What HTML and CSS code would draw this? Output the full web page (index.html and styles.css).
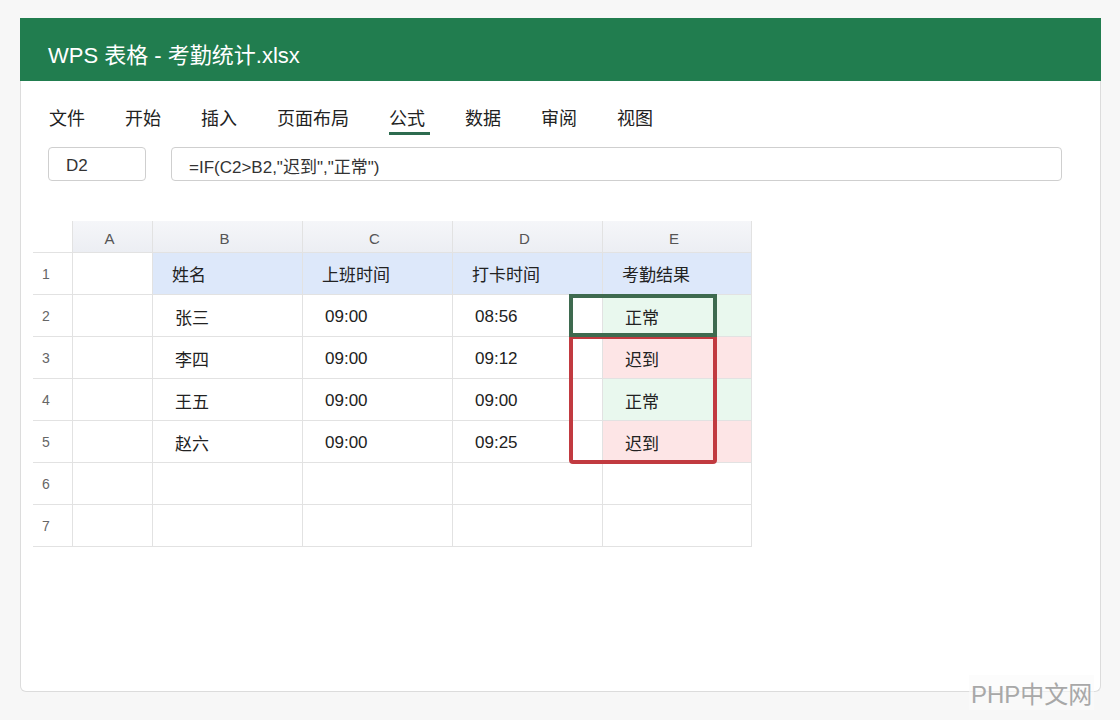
FILE: index.html
```html
<!DOCTYPE html>
<html lang="zh-CN">

<head>
    <meta charset="UTF-8">
    <meta name="viewport" content="width=device-width, initial-scale=1.0">
    <title>WPS 表格 - 考勤统计.xlsx</title>
    <link rel="stylesheet" href="styles.css">
</head>

<body>
    <div class="window">
        <div class="titlebar">WPS 表格 - 考勤统计.xlsx</div>

        <nav class="menu">
            <span class="menu-item">文件</span>
            <span class="menu-item">开始</span>
            <span class="menu-item">插入</span>
            <span class="menu-item">页面布局</span>
            <span class="menu-item active">公式</span>
            <span class="menu-item">数据</span>
            <span class="menu-item">审阅</span>
            <span class="menu-item">视图</span>
        </nav>

        <div class="formula-bar">
            <div class="name-box">D2</div>
            <div class="formula-box">=IF(C2&gt;B2,"迟到","正常")</div>
        </div>

        <div class="sheet">
            <div class="corner"></div>
            <div class="col-head">A</div>
            <div class="col-head">B</div>
            <div class="col-head">C</div>
            <div class="col-head">D</div>
            <div class="col-head last">E</div>

            <div class="row-head">1</div>
            <div class="cell"></div>
            <div class="cell head">姓名</div>
            <div class="cell head">上班时间</div>
            <div class="cell head">打卡时间</div>
            <div class="cell head last">考勤结果</div>

            <div class="row-head">2</div>
            <div class="cell"></div>
            <div class="cell data">张三</div>
            <div class="cell data">09:00</div>
            <div class="cell data">08:56</div>
            <div class="cell data ok last">正常</div>

            <div class="row-head">3</div>
            <div class="cell"></div>
            <div class="cell data">李四</div>
            <div class="cell data">09:00</div>
            <div class="cell data">09:12</div>
            <div class="cell data late last">迟到</div>

            <div class="row-head">4</div>
            <div class="cell"></div>
            <div class="cell data">王五</div>
            <div class="cell data">09:00</div>
            <div class="cell data">09:00</div>
            <div class="cell data ok last">正常</div>

            <div class="row-head">5</div>
            <div class="cell"></div>
            <div class="cell data">赵六</div>
            <div class="cell data">09:00</div>
            <div class="cell data">09:25</div>
            <div class="cell data late last">迟到</div>

            <div class="row-head">6</div>
            <div class="cell"></div>
            <div class="cell"></div>
            <div class="cell"></div>
            <div class="cell"></div>
            <div class="cell last"></div>

            <div class="row-head">7</div>
            <div class="cell"></div>
            <div class="cell"></div>
            <div class="cell"></div>
            <div class="cell"></div>
            <div class="cell last"></div>

            <div class="mark mark-green"></div>
            <div class="mark mark-red"></div>
        </div>
    </div>

    <div class="watermark">PHP中文网</div>
</body>

</html>
```

FILE: styles.css
```css
* {
    box-sizing: border-box;
    margin: 0;
    padding: 0;
}

body {
    font-family: 'Liberation Sans', 'Noto Sans CJK SC', sans-serif;
    background-color: #f7f7f7;
    color: #333;
    padding: 18px 0 0 20px;
    height: 720px;
    overflow: hidden;
    position: relative;
}

.window {
    width: 1081px;
    height: 674px;
    background: #fff;
    border: 1px solid #dcdcdc;
    border-top: none;
    border-radius: 0 0 6px 6px;
}

.titlebar {
    height: 63px;
    margin: 0 -1px;
    padding: 6px 0 0 28px;
    background-color: #217d4f;
    color: #fff;
    font-size: 22px;
    display: flex;
    align-items: center;
}

.menu {
    display: flex;
    gap: 40px;
    padding: 26px 0 0 28px;
}

.menu-item {
    font-size: 18px;
    line-height: 25px;
    color: #222;
    position: relative;
}

.menu-item.active::after {
    content: '';
    position: absolute;
    left: 0;
    right: -5px;
    bottom: -3px;
    height: 3px;
    background-color: #2d6b4f;
}

.formula-bar {
    display: flex;
    gap: 25px;
    margin-top: 15px;
    padding: 0 38px 0 27px;
}

.name-box,
.formula-box {
    height: 34px;
    border: 1px solid #cfcfcf;
    border-radius: 4px;
    font-size: 17px;
    color: #333;
    padding: 3px 0 0 17px;
    display: flex;
    align-items: center;
}

.name-box {
    width: 98px;
}

.formula-box {
    flex: 1;
}

.sheet {
    display: grid;
    grid-template-columns: 39px 80px repeat(4, 150px);
    grid-template-rows: 32px repeat(7, 42px);
    margin: 40px 0 0 12px;
    width: 719px;
    position: relative;
}

.corner,
.row-head,
.col-head,
.cell {
    border-bottom: 1px solid #e2e2e2;
    display: flex;
    align-items: center;
}

.col-head,
.cell {
    border-left: 1px solid #e2e2e2;
}

.last {
    border-right: 1px solid #e2e2e2;
}

.col-head {
    justify-content: center;
    background: linear-gradient(#f5f6f9, #eceef3);
    font-size: 15px;
    color: #555;
    padding: 3px 6px 0 0;
}

.row-head {
    font-size: 14px;
    color: #666;
    padding-left: 9px;
}

.cell {
    font-size: 17px;
    color: #222;
}

.cell.head {
    background-color: #dde8fa;
    padding-left: 19px;
}

.cell.data {
    padding: 2px 0 0 22px;
}

.cell.ok {
    background-color: #e9f8ee;
}

.cell.late {
    background-color: #fde5e6;
}

.mark {
    position: absolute;
    left: 536px;
    width: 148px;
}

.mark-green {
    top: 73px;
    height: 43px;
    border: 4px solid #3e6a4f;
    z-index: 2;
}

.mark-red {
    top: 114px;
    height: 129px;
    border: 4px solid #c13a40;
    border-radius: 0 0 4px 4px;
    z-index: 1;
}

.watermark {
    position: absolute;
    left: 969px;
    top: 675px;
    font-size: 24px;
    color: #a8a8a8;
    background: rgba(250, 250, 250, 0.6);
    padding: 0 2px;
}
```
